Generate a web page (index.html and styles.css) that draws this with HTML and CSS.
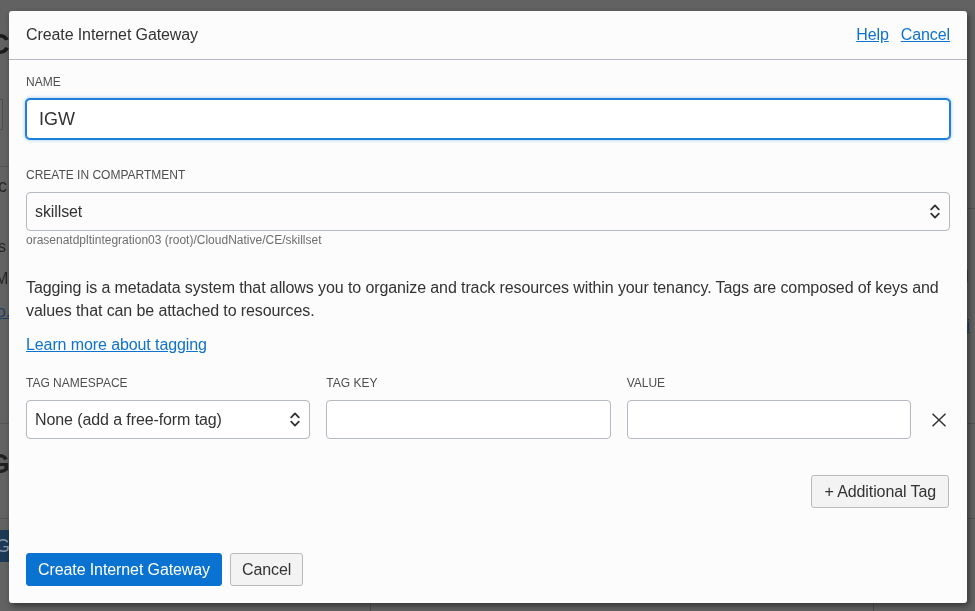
FILE: index.html
```html
<!DOCTYPE html>
<html lang="en">
<head>
<meta charset="utf-8">
<title>Create Internet Gateway</title>
<link rel="stylesheet" href="styles.css">
</head>
<body>
<div class="page" aria-hidden="true">
  <span class="bg-frag bg-c">C</span>
  <span class="bg-frag bg-box"></span>
  <span class="bg-line bg-line-a"></span>
  <span class="bg-line bg-line-b"></span>
  <span class="bg-line bg-line-c"></span>
  <span class="bg-line bg-line-d"></span>
  <span class="bg-frag bg-ic">ic</span>
  <span class="bg-frag bg-s">s</span>
  <span class="bg-frag bg-m">M</span>
  <span class="bg-frag bg-o">o.</span>
  <span class="bg-frag bg-g">G</span>
  <span class="bg-frag bg-btn">G</span>
  <span class="bg-frag bg-ti">ti</span>
  <span class="bg-frag bg-mark">l</span>
  <span class="bg-vline bg-vline-a"></span>
  <span class="bg-vline bg-vline-b"></span>
</div>

<div class="modal" role="dialog" aria-labelledby="modal-title">
  <header class="modal-header">
    <h2 class="modal-title" id="modal-title">Create Internet Gateway</h2>
    <nav class="header-links">
      <a href="#">Help</a>
      <a href="#">Cancel</a>
    </nav>
  </header>

  <div class="modal-body">
    <div class="field">
      <label class="field-label" for="name">Name</label>
      <input class="text-input is-focused" id="name" type="text" value="IGW">
    </div>

    <div class="field field-compartment">
      <label class="field-label">Create in Compartment</label>
      <div class="select-box">
        <span class="select-value">skillset</span>
        <svg class="chevrons" width="10" height="17" viewBox="0 0 10 17" aria-hidden="true">
          <path d="M1.2 6.4 L5 2.4 L8.8 6.4 M1.2 10.6 L5 14.6 L8.8 10.6" fill="none" stroke="#333" stroke-width="1.8" stroke-linecap="round" stroke-linejoin="round"/>
        </svg>
      </div>
      <div class="field-help">orasenatdpltintegration03 (root)/CloudNative/CE/skillset</div>
    </div>

    <p class="tag-intro">Tagging is a metadata system that allows you to organize and track resources within your tenancy. Tags are composed of keys and values that can be attached to resources.</p>
    <a class="learn-link" href="#">Learn more about tagging</a>

    <div class="tag-grid">
      <label class="field-label">Tag Namespace</label>
      <label class="field-label">Tag Key</label>
      <label class="field-label">Value</label>
      <span></span>

      <div class="select-box">
        <span class="select-value">None (add a free-form tag)</span>
        <svg class="chevrons" width="10" height="17" viewBox="0 0 10 17" aria-hidden="true">
          <path d="M1.2 6.4 L5 2.4 L8.8 6.4 M1.2 10.6 L5 14.6 L8.8 10.6" fill="none" stroke="#333" stroke-width="1.8" stroke-linecap="round" stroke-linejoin="round"/>
        </svg>
      </div>
      <input class="text-input tag-input" type="text">
      <input class="text-input tag-input" type="text">
      <button class="remove-tag" type="button" aria-label="Remove tag">
        <svg width="16" height="14" viewBox="0 0 16 14" aria-hidden="true">
          <path d="M1.5 0.8 L14.5 13.2 M14.5 0.8 L1.5 13.2" fill="none" stroke="#333" stroke-width="1.5"/>
        </svg>
      </button>
    </div>

    <div class="add-row">
      <button class="btn btn-secondary" type="button">+ Additional Tag</button>
    </div>
  </div>

  <footer class="modal-footer">
    <button class="btn btn-primary" type="button">Create Internet Gateway</button>
    <button class="btn btn-secondary btn-cancel" type="button">Cancel</button>
  </footer>
</div>
</body>
</html>
```

FILE: styles.css
```css
* {
  box-sizing: border-box;
}

html, body {
  margin: 0;
  height: 100%;
}

body {
  background: #626262;
  font-family: "Liberation Sans", Arial, sans-serif;
  color: #333;
  overflow: hidden;
}

/* dimmed page underneath the modal */
.page {
  position: fixed;
  inset: 0;
}

.bg-frag,
.bg-line,
.bg-vline {
  position: absolute;
}

.bg-c {
  left: -12px;
  top: 27px;
  font-size: 30px;
  font-weight: bold;
  color: #1c1c1c;
}

.bg-box {
  left: -40px;
  top: 99px;
  width: 43px;
  height: 31px;
  border: 1px solid #4c4c4c;
  background: #666;
}

.bg-line {
  height: 1px;
  background: #535353;
  left: 0;
  right: 0;
}

.bg-line-a { top: 166px; right: auto; width: 20px; }
.bg-line-b { top: 208px; left: auto; width: 20px; }
.bg-line-c { top: 423px; }
.bg-line-d { top: 518px; }

.bg-ic { left: -6px; top: 176px; font-size: 18px; color: #262626; }
.bg-s { left: -2px; top: 238px; font-size: 16px; color: #262626; }
.bg-m { left: -5px; top: 270px; font-size: 16px; color: #262626; }
.bg-o { left: -3px; top: 303px; font-size: 16px; color: #1d3f63; text-decoration: underline; }
.bg-g { left: -12px; top: 448px; font-size: 28px; font-weight: bold; color: #202020; }

.bg-btn {
  left: -40px;
  top: 530px;
  width: 50px;
  height: 32px;
  background: #1c3a57;
  color: #8a9aab;
  font-size: 18px;
  line-height: 32px;
  text-align: right;
}

.bg-ti { left: 962px; top: 317px; font-size: 16px; color: #1d4170; text-decoration: underline; }
.bg-mark { left: 965px; top: 268px; font-size: 16px; color: #2a2a2a; }

.bg-vline {
  top: 600px;
  width: 1px;
  height: 20px;
  background: #4d4d4d;
}
.bg-vline-a { left: 370px; }
.bg-vline-b { left: 873px; }

/* modal */
.modal {
  position: fixed;
  top: 11px;
  left: 9px;
  width: 958px;
  background: #fcfcfc;
  border-radius: 3px;
  box-shadow: 2px 3px 6px rgba(0, 0, 0, 0.45);
  letter-spacing: -0.1px;
}

.modal-header {
  height: 49px;
  padding: 0 17px;
  border-bottom: 1px solid #b3b6bc;
  display: flex;
  align-items: center;
  justify-content: space-between;
}

.modal-title {
  margin: 0;
  font-size: 16px;
  font-weight: normal;
  color: #333;
}

.header-links {
  display: flex;
  gap: 12px;
  font-size: 16px;
}

.header-links a,
.learn-link {
  color: #0f72cd;
  text-decoration: underline;
}

.modal-body {
  padding: 15px 17px 0;
}

.field {
  display: flex;
  flex-direction: column;
}

.field-compartment {
  margin-top: 29px;
}

.field-label {
  display: block;
  font-size: 12px;
  line-height: 14px;
  text-transform: uppercase;
  color: #4f4f4f;
  margin-bottom: 10px;
  letter-spacing: 0;
}

.text-input {
  height: 40px;
  width: 100%;
  border: 1px solid #b5b9c1;
  border-radius: 4px;
  background: #fff;
  padding: 0 12px;
  font-family: inherit;
  font-size: 18px;
  color: #333;
  outline: none;
}

.text-input.is-focused {
  border-color: #1c7fd9;
  box-shadow: 0 0 0 1px #1c7fd9, 0 0 3px 2px rgba(28, 127, 217, 0.25);
}

.select-box {
  height: 39px;
  border: 1px solid #b5b9c1;
  border-radius: 4px;
  background: #fff;
  padding: 0 9px 0 8px;
  display: flex;
  align-items: center;
  justify-content: space-between;
  font-size: 16px;
  color: #333;
}

.field-compartment .select-box {
  background: #fcfcfc;
}

.select-value {
  padding-top: 1px;
}

.chevrons {
  flex: none;
}

.field-help {
  margin-top: 2px;
  font-size: 12px;
  line-height: 14px;
  color: #6e6e6e;
  letter-spacing: 0;
}

.tag-intro {
  margin: 29px 0 0;
  font-size: 16px;
  line-height: 23px;
  color: #333;
}

.learn-link {
  display: inline-block;
  margin-top: 11px;
  font-size: 16px;
  line-height: 23px;
}

.tag-grid {
  margin-top: 20px;
  display: grid;
  grid-template-columns: 1fr 1fr 1fr 23px;
  column-gap: 16px;
  align-items: center;
}

.tag-grid .field-label {
  align-self: start;
  margin-bottom: 9px;
}

.tag-input {
  height: 39px;
}

.remove-tag {
  border: none;
  background: none;
  padding: 0;
  width: 23px;
  height: 39px;
  display: flex;
  align-items: center;
  justify-content: center;
  margin-top: 1px;
  cursor: pointer;
}

.add-row {
  margin-top: 36px;
  display: flex;
  justify-content: flex-end;
  padding-right: 1px;
}

.btn {
  height: 33px;
  padding: 0 12px;
  border-radius: 3px;
  font-family: inherit;
  font-size: 16px;
  line-height: 31px;
  letter-spacing: -0.1px;
  cursor: pointer;
}

.btn-primary {
  background: #0a72d0;
  border: 1px solid #0a72d0;
  color: #fff;
  padding: 0 11px;
}

.btn-secondary {
  background: #f3f3f3;
  border: 1px solid #b8babe;
  color: #333;
}

.btn-cancel {
  padding: 0 11px;
}

.modal-footer {
  margin-top: 45px;
  padding: 0 17px 17px;
  display: flex;
  gap: 8px;
}
```
